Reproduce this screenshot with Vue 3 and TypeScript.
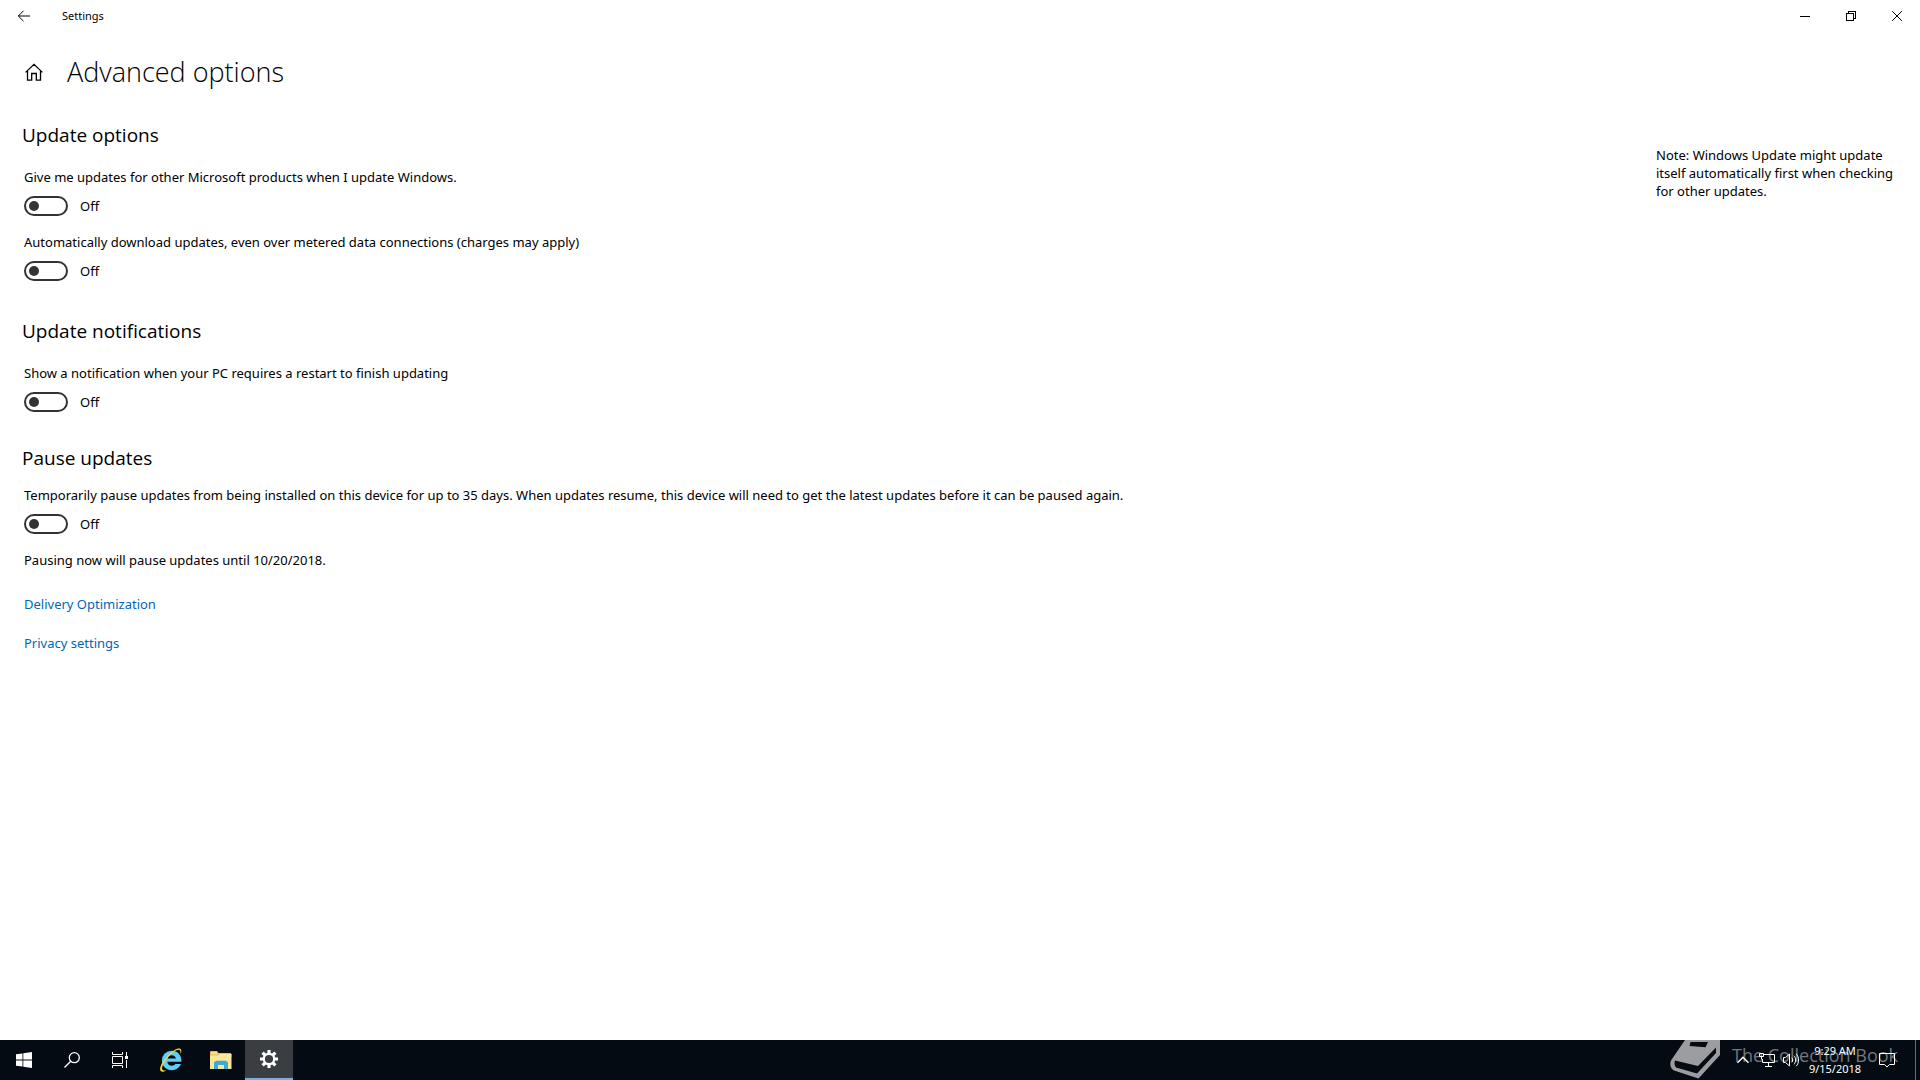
<script setup lang="ts">
import { reactive } from 'vue'

interface Setting {
  id: string
  label: string
  on: boolean
}

interface Section {
  title: string
  kind: string
  settings: Setting[]
}

const sections = reactive<Section[]>([
  {
    title: 'Update options',
    kind: 'options',
    settings: [
      { id: 'other-products', label: 'Give me updates for other Microsoft products when I update Windows.', on: false },
      { id: 'metered', label: 'Automatically download updates, even over metered data connections (charges may apply)', on: false },
    ],
  },
  {
    title: 'Update notifications',
    kind: 'notifications',
    settings: [
      { id: 'restart-notice', label: 'Show a notification when your PC requires a restart to finish updating', on: false },
    ],
  },
  {
    title: 'Pause updates',
    kind: 'pause',
    settings: [
      {
        id: 'pause',
        label:
          'Temporarily pause updates from being installed on this device for up to 35 days. When updates resume, this device will need to get the latest updates before it can be paused again.',
        on: false,
      },
    ],
  },
])

const links = ['Delivery Optimization', 'Privacy settings']
</script>

<template>
  <div class="desktop">
    <header class="titlebar">
      <button class="back" aria-label="Back">
        <svg width="14" height="12" viewBox="0 0 14 12"><path d="M13 6H1.500M6.500 .8L1.300 6l5.200 5.200" /></svg>
      </button>
      <span class="app-name">Settings</span>
      <div class="caption-buttons">
        <button aria-label="Minimize">
          <svg width="10" height="10" viewBox="0 0 10 10" shape-rendering="crispEdges"><path d="M0 5.500h10" /></svg>
        </button>
        <button aria-label="Restore">
          <svg width="10" height="10" viewBox="0 0 10 10" shape-rendering="crispEdges"><path d="M.5 2.500h7v7h-7zM2.500 2.500v-2h7v7h-2" /></svg>
        </button>
        <button aria-label="Close">
          <svg width="10" height="10" viewBox="0 0 10 10"><path d="M.2 .2l9.600 9.600M9.800 .2L.2 9.800" /></svg>
        </button>
      </div>
    </header>

    <div class="page-head">
      <button class="home" aria-label="Home">
        <svg width="18" height="18" viewBox="0 0 18 18"><path d="M.6 9.400L9 1.300l8.400 8.100M2.500 8v9.200h4.200v-6.700h4.600v6.700h4.200V8" /></svg>
      </button>
      <h1>Advanced options</h1>
    </div>

    <div class="body">
      <main>
        <section v-for="s in sections" :key="s.title" :class="s.kind">
          <h2>{{ s.title }}</h2>
          <div v-for="item in s.settings" :key="item.id" class="setting">
            <label :for="item.id">{{ item.label }}</label>
            <div class="toggle-row">
              <input :id="item.id" v-model="item.on" type="checkbox" role="switch" />
              <span>{{ item.on ? 'On' : 'Off' }}</span>
            </div>
          </div>
        </section>
        <p class="pause-note">Pausing now will pause updates until 10/20/2018.</p>
        <nav class="links">
          <a v-for="l in links" :key="l" href="#">{{ l }}</a>
        </nav>
      </main>
      <aside>Note: Windows Update might update itself automatically first when checking for other updates.</aside>
    </div>

    <footer class="taskbar">
      <button class="task" aria-label="Start">
        <svg width="16" height="16" viewBox="0 0 16 16" fill="#fff"><path d="M0 2.300L6.500 1.400v6.200H0zM7.300 1.300L16 0v7.600H7.300zM0 8.400h6.500v6.200L0 13.700zM7.300 8.400H16V16l-8.700-1.300z" /></svg>
      </button>
      <button class="task" aria-label="Search">
        <svg width="16" height="16" viewBox="0 0 16 16" fill="none" stroke="#fff" stroke-width="1.300"><circle cx="10.300" cy="5.700" r="5" /><path d="M6.700 9.300L.5 15.500" /></svg>
      </button>
      <button class="task" aria-label="Task view">
        <svg width="16" height="16" viewBox="0 0 16 16" fill="none" stroke="#fff"><path d="M.5 0v2.500h10V0M.5 4.500h10v7H.5zM.5 16v-2.500h10V16M14.500 0v4M14.500 8v8" /><path d="M13 4h3v3h-3z" fill="#fff" stroke="none" /></svg>
      </button>
      <button class="task wide" aria-label="Internet Explorer">
        <svg width="26" height="26" viewBox="0 0 24 24">
          <path d="M12.600 3.400a9 9 0 0 0-9 9.100c0 5.100 4 9 9 9 4 0 7.300-2.200 8.600-5.700h-5.100c-.7 1-1.800 1.600-3.300 1.600-2.400 0-4-1.500-4.200-3.700h13c.5-6-3.300-10.300-9-10.300zM8.700 10.700c.4-1.900 1.900-3.200 4-3.200s3.500 1.300 3.800 3.200z" fill="#62cdf6" />
          <path d="M21 6.700c.8-2.400.7-4.200-.4-5-2-1.400-7 1.200-11.600 6.200C3.500 13.700.6 20.100 2.500 22.200c1.200 1.300 3.500.6 6.300-1.200-2.300 1-3.900 1.100-4.600.1-1.400-2.100 1.100-7 5.400-11.900 4.400-4.900 8.600-7.600 10.400-6.300.7.500.9 1.800 1 3.800z" fill="#f8d338" />
        </svg>
      </button>
      <button class="task" aria-label="File Explorer">
        <svg width="22" height="18" viewBox="0 0 22 18">
          <path d="M0 1.200C0 .5.500 0 1.200 0H7l1.500 2H20c.7 0 1.300.5 1.300 1.200V6H0z" fill="#e9b94e" />
          <path d="M1 1h5.500L8 3.500H1z" fill="#f7dc8a" />
          <path d="M0 4.500h8L9.500 3H21.500v15H0z" fill="#fbe49c" />
          <path d="M4 18v-6.500L6 9.800h10l2 1.700V18h-4v-4H8v4z" fill="#3fa9d6" />
        </svg>
      </button>
      <button class="task active" aria-label="Settings">
        <svg width="18" height="18" viewBox="0 0 18 18" fill="none" stroke="#fff">
          <circle cx="9" cy="9" r="5.200" stroke-width="2.200" />
          <g stroke-width="3.200"><path d="M9 0v3.400M9 14.600V18M0 9h3.400M14.600 9H18M2.600 2.600L5 5M13 13l2.400 2.400M2.600 15.400L5 13M13 5l2.400-2.400" /></g>
        </svg>
      </button>

      <div class="tray">
        <button aria-label="Show hidden icons">
          <svg width="12" height="8" viewBox="0 0 12 8"><path d="M.5 6.800L6 1.300l5.500 5.500" stroke-width="1.400" /></svg>
        </button>
        <button aria-label="Network">
          <svg width="16" height="14" viewBox="0 0 16 14"><path d="M5 1.500h10.500v8H3.500V6M.5 .5h4v3h-4zM2.500 3.500v3M9.500 9.500v4M6 13.500h7" /></svg>
        </button>
        <button aria-label="Volume">
          <svg width="17" height="14" viewBox="0 0 17 14"><path d="M.5 4.500h2L6.500 1v12l-4-3.500h-2zM8.800 4.700c1.100 1.400 1.100 3.200 0 4.600M11 2.700c2.200 2.500 2.200 6.100 0 8.600M13.200.8c3.200 3.500 3.200 8.900 0 12.400" /></svg>
        </button>
        <time class="clock"><span>9:29 AM</span><span>9/15/2018</span></time>
        <button class="notices" aria-label="Notifications">
          <svg width="16" height="16" viewBox="0 0 16 16"><path d="M.5 1.500h15v11h-5L8 15l-2.500-2.500h-5z" /></svg>
        </button>
        <div class="peek"></div>
      </div>

      <div class="watermark">
        <svg width="52" height="40" viewBox="0 0 52 40">
          <path d="M15 0H50V15L28.500 38.500 4 30.500C-.5 28-.5 22 2 19z" fill="#9b9da0" />
          <path d="M20.500 2l-1 4 16 1.200 2.500-5.200z" fill="#060b12" />
          <path d="M5 20.500L28 26 46 7.500v5.500L27 33.500 6 27.500c-1.500-1.500-2-5-1-7z" fill="#060b12" />
        </svg>
        <span>The Collection Book</span>
      </div>
    </footer>
  </div>
</template>

<style>
body {
  margin: 0;
}
</style>

<style scoped>
.desktop {
  display: flex;
  flex-direction: column;
  min-height: 100vh;
  background: #fff;
  color: #000;
  font-family: 'Noto Sans', 'Open Sans', sans-serif;
  font-size: 13px;
  line-height: 20px;
}

button {
  display: flex;
  align-items: center;
  justify-content: center;
  padding: 0;
  border: 0;
  background: none;
}

svg {
  display: block;
  flex: none;
}

.titlebar {
  display: flex;
  align-items: center;
  height: 32px;
}

.back {
  width: 48px;
  height: 32px;
}

.titlebar svg,
.home svg {
  fill: none;
  stroke: #000;
}

.app-name {
  padding-left: 14px;
  font-size: 11px;
}

.caption-buttons {
  display: flex;
  margin-left: auto;
}

.caption-buttons button {
  width: 46px;
  height: 32px;
}

.page-head {
  display: flex;
  align-items: center;
  gap: 24px;
  padding: 20px 25px 0;
}

.home svg {
  stroke-width: 1.3;
}

h1,
h2 {
  font-family: 'Open Sans', 'Noto Sans', sans-serif;
}

h1 {
  margin: 0;
  font-size: 27px;
  font-weight: 300;
  line-height: 40px;
}

.body {
  display: flex;
  flex: 1;
  justify-content: space-between;
  padding: 29px 24px 24px;
}

h2 {
  margin: 0 0 18px -2px;
  font-size: 19px;
  font-weight: 400;
  line-height: 28px;
}

.notifications {
  margin-top: 36px;
}

.pause {
  margin-top: 32px;
}

.pause h2 {
  margin-bottom: 13px;
}

.setting + .setting {
  margin-top: 16px;
}

.setting label {
  display: block;
}

.toggle-row {
  display: flex;
  align-items: center;
  gap: 12px;
  margin-top: 9px;
}

.toggle-row input {
  display: flex;
  align-items: center;
  box-sizing: border-box;
  width: 44px;
  height: 20px;
  margin: 0;
  padding: 0 3px;
  border: 2px solid #333;
  border-radius: 10px;
  appearance: none;
}

.toggle-row input::before {
  width: 10px;
  height: 10px;
  border-radius: 5px;
  background: #333;
  content: '';
}

.toggle-row input:checked {
  justify-content: flex-end;
  border-color: #0067b8;
  background: #0067b8;
}

.toggle-row input:checked::before {
  background: #fff;
}

.pause-note {
  margin: 16px 0 24px;
}

.links {
  display: flex;
  flex-direction: column;
  align-items: flex-start;
  gap: 19px;
}

.links a {
  color: #0067b8;
  text-decoration: none;
}

aside {
  flex: none;
  width: 240px;
  padding-top: 25px;
  line-height: 18px;
}

.taskbar {
  position: relative;
  display: flex;
  height: 40px;
  background: #050b12;
}

.task {
  width: 48px;
  height: 40px;
}

.task.wide {
  width: 53px;
}

.task.active {
  box-sizing: border-box;
  border-bottom: 2px solid #76b0e4;
  background: #3a3d42;
}

.tray {
  position: relative;
  z-index: 1;
  display: flex;
  align-items: center;
  margin-left: auto;
  color: #fff;
}

.tray button {
  width: 24px;
  height: 40px;
}

.tray svg {
  fill: none;
  stroke: #fff;
}

.clock {
  display: flex;
  flex-direction: column;
  width: 56px;
  margin-left: 4px;
  font-size: 11px;
  line-height: 18px;
  text-align: center;
}

.tray .notices {
  width: 48px;
  margin-right: 4px;
}

.peek {
  width: 4px;
  height: 40px;
  border-left: 1px solid #6b6f74;
}

.watermark {
  position: absolute;
  right: 22px;
  bottom: 0;
  display: flex;
  align-items: center;
  gap: 10px;
  height: 40px;
  color: #74777b;
  font-family: 'Open Sans', 'Noto Sans', sans-serif;
  font-size: 18px;
  line-height: 24px;
}

.watermark span {
  margin-bottom: 10px;
}
</style>
